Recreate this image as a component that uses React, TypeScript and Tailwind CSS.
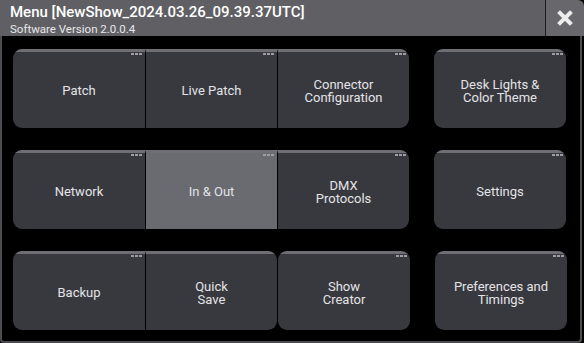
import React from 'react'

type Seg = { label: string[]; active?: boolean; dots?: boolean }

const Dots: React.FC = () => (
  <div className="absolute top-[1px] right-[3px] flex gap-[1px]">
    <div className="w-[3px] h-[2px] bg-[#9c9ca2]" />
    <div className="w-[3px] h-[2px] bg-[#9c9ca2]" />
    <div className="w-[3px] h-[2px] bg-[#9c9ca2]" />
  </div>
)

const Segment: React.FC<{ seg: Seg; first?: boolean }> = ({ seg, first }) => (
  <div
    className={`relative w-[132px] h-full flex items-center justify-center border-t-[3px] border-t-[#6e6e74] ${
      first ? '' : 'border-l border-l-black'
    } ${seg.active ? 'bg-[#6a6a71]' : 'bg-[#38383f]'}`}
  >
    {seg.dots !== false && <Dots />}
    <div className="text-center text-[13px] leading-[13.5px] text-[#e4e4e6] mt-[2px]">
      {seg.label.map((l) => (
        <div key={l}>{l}</div>
      ))}
    </div>
  </div>
)

const Group: React.FC<{ segs: Seg[] }> = ({ segs }) => (
  <div className="flex h-full rounded-[9px] overflow-hidden">
    {segs.map((s, i) => (
      <Segment key={s.label.join()} seg={s} first={i === 0} />
    ))}
  </div>
)

export default function App() {
  return (
    <div
      className="w-[584px] h-[343px] bg-black flex flex-col overflow-hidden"
      style={{ fontFamily: 'Roboto, "Liberation Sans", sans-serif' }}
    >
      {/* Title bar */}
      <div className="h-[36px] flex shrink-0">
        <div className="flex-1 bg-[#606064] pl-[10px] pt-[3px]">
          <div className="text-[15px] leading-[19px] font-medium text-white">
            Menu [NewShow_2024.03.26_09.39.37UTC]
          </div>
          <div className="text-[11.5px] leading-[13px] mt-[1px] text-[#e8e8ea]">Software Version 2.0.0.4</div>
        </div>
        <div className="w-[1px] bg-[#1c1c1e]" />
        <div className="w-[38px] bg-[#68686c] rounded-tr-[6px] flex items-center justify-center">
          <svg width="16" height="16" viewBox="0 0 16 16">
            <path d="M3 3 L13 13 M13 3 L3 13" stroke="#ececec" strokeWidth="4" strokeLinecap="square" />
          </svg>
        </div>
      </div>

      {/* Content */}
      <div className="flex-1 mr-[2px] border-l-2 border-r-2 border-b-2 border-[#4c4c50] rounded-b-[4px] pl-[11px] pt-[13px] flex flex-col gap-[22px]">
        <div className="flex h-[79px] gap-[25px]">
          <Group
            segs={[
              { label: ['Patch'] },
              { label: ['Live Patch'] },
              { label: ['Connector', 'Configuration'] },
            ]}
          />
          <Group segs={[{ label: ['Desk Lights &', 'Color Theme'] }]} />
        </div>
        <div className="flex h-[79px] gap-[25px]">
          <Group
            segs={[
              { label: ['Network'] },
              { label: ['In & Out'], active: true },
              { label: ['DMX', 'Protocols'] },
            ]}
          />
          <Group segs={[{ label: ['Settings'] }]} />
        </div>
        <div className="flex h-[79px] gap-[25px]">
          <div className="flex h-full gap-[1px]">
            <Group segs={[{ label: ['Backup'] }, { label: ['Quick', 'Save'], dots: false }]} />
            <Group segs={[{ label: ['Show', 'Creator'] }]} />
          </div>
          <Group segs={[{ label: ['Preferences and', 'Timings'] }]} />
        </div>
      </div>
    </div>
  )
}
